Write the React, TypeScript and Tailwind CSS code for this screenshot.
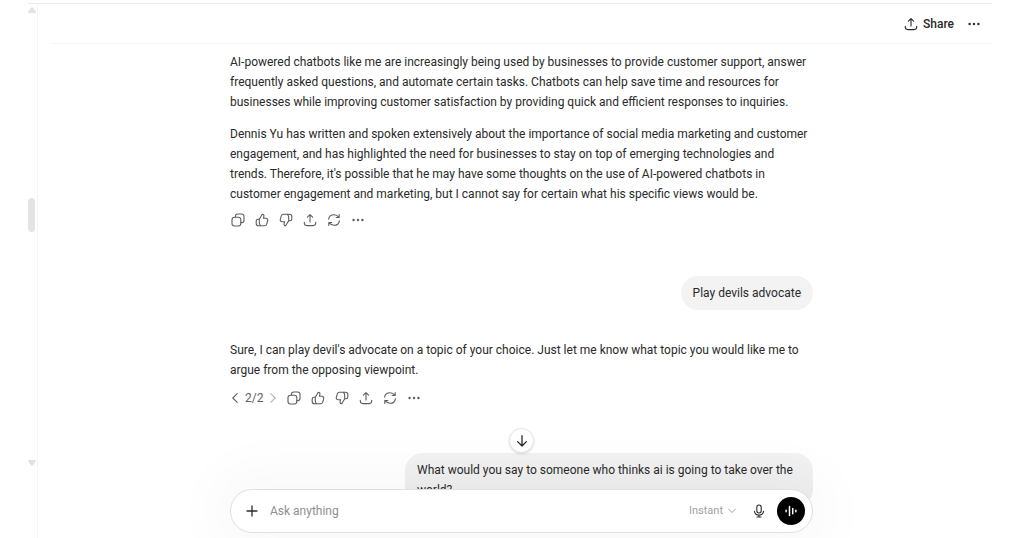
import React, { useState } from 'react';

interface IconProps {
  className?: string;
  children: React.ReactNode;
}

const Icon: React.FC<IconProps> = ({ className = 'size-4', children }) => (
  <svg
    viewBox="0 0 16 16"
    className={className}
    fill="none"
    stroke="currentColor"
    strokeWidth="1.1"
    strokeLinecap="round"
    strokeLinejoin="round"
    aria-hidden="true"
  >
    {children}
  </svg>
);

const CopyIcon = () => (
  <Icon>
    <rect x="2" y="5.2" width="8.8" height="8.8" rx="2.4" />
    <path d="M5.4 5V4.4A2.4 2.4 0 0 1 7.8 2h3.8A2.4 2.4 0 0 1 14 4.4v3.8a2.4 2.4 0 0 1-2.4 2.4h-.7" />
  </Icon>
);

const ThumbPath = () => (
  <>
    <path d="M5.3 7.3 8.3 2.2c1.3 0 1.9 1 1.6 2.1L9.4 6.3h2.5c1.3 0 2.2 1.2 1.8 2.4l-1 3.4c-.3 1-1.1 1.600-2.100 1.600H4.700c-1.400 0-2.500-1-2.500-2.300V9c0-1 .8-1.800 1.800-1.800h1.300Z" />
    <path d="M5.3 7.3v2.9c0 1.5.4 2.5 1.1 3.4" />
  </>
);

const ThumbUpIcon = () => <Icon><ThumbPath /></Icon>;
const ThumbDownIcon = () => <Icon className="size-4 rotate-180"><ThumbPath /></Icon>;

const ShareIcon = () => (
  <Icon>
    <path d="M8 10V2.800M5.400 5.200 8 2.600l2.600 2.600M2.300 10.300v.8c0 1.500 1 2.500 2.500 2.500h6.400c1.500 0 2.500-1 2.500-2.500v-.8" />
  </Icon>
);

const RetryIcon = () => (
  <Icon>
    <path d="M2.600 7.200C3 4.500 5.200 2.700 8 2.700c2 0 3.600.9 4.900 2.600M13.200 2.500v3h-3M13.400 8.800c-.4 2.700-2.600 4.500-5.400 4.500-2 0-3.600-.9-4.900-2.600M2.800 13.500v-3h3" />
  </Icon>
);

const MoreIcon = () => (
  <Icon>
    <g fill="currentColor" stroke="none">
      <circle cx="3.600" cy="8" r="1.200" />
      <circle cx="8" cy="8" r="1.200" />
      <circle cx="12.400" cy="8" r="1.200" />
    </g>
  </Icon>
);

const actions = [
  { label: 'Copy', icon: <CopyIcon /> },
  { label: 'Good response', icon: <ThumbUpIcon /> },
  { label: 'Bad response', icon: <ThumbDownIcon /> },
  { label: 'Share', icon: <ShareIcon /> },
  { label: 'Try again', icon: <RetryIcon /> },
  { label: 'More actions', icon: <MoreIcon /> },
];

const MessageActions = () => (
  <div className="flex gap-2">
    {actions.map(({ label, icon }) => (
      <button key={label} type="button" aria-label={label}>{icon}</button>
    ))}
  </div>
);

const App: React.FC = () => {
  const [draft, setDraft] = useState('');

  return (
    <div className="h-screen overflow-hidden bg-white pl-7 pr-8 pt-[3px] font-['Roboto','Open_Sans',sans-serif] text-xs leading-5 text-[#2a2a2a]">
      <div className="flex h-full border-t border-[#ebebeb]">
        <aside className="flex w-[10px] shrink-0 flex-col border-r border-[#f5f5f5]">
          <svg viewBox="0 0 8 6" className="mt-[3px] h-[6px] w-2 text-[#e2e2e2]" aria-hidden="true">
            <path d="M3 .5h2L8 5v1H0V5Z" fill="currentColor" />
          </svg>
          <div className="mt-[185px] h-[34px] w-[7px] rounded-full bg-[#e4e4e4]" />
          <svg viewBox="0 0 8 6" className="mt-[228px] h-[6px] w-2 text-[#e2e2e2]" aria-hidden="true">
            <path d="M0 0h8v1L5 5.500H3L0 1Z" fill="currentColor" />
          </svg>
        </aside>

        <main className="relative ml-[13px] flex min-w-0 flex-1 flex-col">
          <header className="flex h-10 shrink-0 items-center justify-end gap-3 border-b border-[#f6f6f6] pr-[10px]">
            <button type="button" className="flex items-center gap-1 font-medium">
              <ShareIcon />
              Share
            </button>
            <button type="button" aria-label="Conversation options"><MoreIcon /></button>
          </header>

          <div className="min-h-0 flex-1 overflow-hidden">
            <div className="mx-auto flex max-w-[583px] flex-col pt-2">
              <article>
                <p>
                  AI-powered chatbots like me are increasingly being used by businesses to provide customer support, answer frequently asked questions, and automate certain tasks. Chatbots can help save time and resources for businesses while improving customer satisfaction by providing quick and efficient responses to inquiries.
                </p>
                <p className="mt-3">
                  Dennis Yu has written and spoken extensively about the importance of social media marketing and customer engagement, and has highlighted the need for businesses to stay on top of emerging technologies and trends. Therefore, it's possible that he may have some thoughts on the use of AI-powered chatbots in customer engagement and marketing, but I cannot say for certain what his specific views would be.
                </p>
                <div className="mt-2 text-[#5d5d5d]">
                  <MessageActions />
                </div>
              </article>

              <p className="mt-12 self-end rounded-full bg-[#f3f3f3] px-3 py-[7px]">Play devils advocate</p>

              <article className="mt-[30px]">
                <p>
                  Sure, I can play devil's advocate on a topic of your choice. Just let me know what topic you would like me to argue from the opposing viewpoint.
                </p>
                <div className="mt-2 flex items-center text-[#5d5d5d]">
                  <button type="button" aria-label="Previous response">
                    <Icon className="h-4 w-[10px]"><path d="M11.500 1 4.500 8l7 7" strokeWidth="1.700" /></Icon>
                  </button>
                  <span className="px-[5px]">2/2</span>
                  <button type="button" aria-label="Next response" className="mr-2 text-[#b4b4b4]">
                    <Icon className="h-4 w-[10px]"><path d="m4.500 1 7 7-7 7" strokeWidth="1.700" /></Icon>
                  </button>
                  <MessageActions />
                </div>
              </article>

              <p className="mt-[45px] w-[408px] self-end rounded-[18px] bg-linear-to-b from-[#f2f2f2] to-[#ececec] px-3 py-[7px]">
                What would you say to someone who thinks ai is going to take over the world?
              </p>
            </div>
          </div>

          <div className="absolute inset-x-0 bottom-0 flex flex-col items-center pb-[5px]">
            <button
              type="button"
              aria-label="Scroll to bottom"
              className="mb-9 flex size-[25px] items-center justify-center rounded-full border border-[#e6e6e6] bg-white shadow-sm"
            >
              <Icon className="size-[14px]"><path d="M8 2v11.500M3 8.700l5 5 5-5" strokeWidth="1.500" /></Icon>
            </button>
            <form
              onSubmit={(e) => e.preventDefault()}
              className="flex h-11 w-full max-w-[583px] items-center rounded-full border border-[#e0e0e0] bg-white pl-[13px] pr-[7px] shadow-[0_0_60px_16px_rgba(0,0,0,0.03)]"
            >
              <button type="button" aria-label="Add files">
                <Icon><path d="M8 3v10M3 8h10" strokeWidth="1.300" /></Icon>
              </button>
              <input
                type="text"
                aria-label="Message"
                value={draft}
                onChange={(e) => setDraft(e.target.value)}
                placeholder="Ask anything"
                className="ml-[10px] min-w-0 flex-1 outline-none placeholder:text-[#8f8f8f]"
              />
              <button type="button" className="flex items-center gap-1 text-[11px] text-[#a0a0a0]">
                Instant
                <Icon className="size-[10px]"><path d="m2.500 5 5.500 5.500L13.500 5" strokeWidth="1.600" /></Icon>
              </button>
              <button type="button" aria-label="Dictate" className="ml-[14px]">
                <Icon>
                  <rect x="5.800" y="2" width="4.400" height="8" rx="2.200" />
                  <path d="M3.400 8.300a4.700 4.700 0 0 0 9.200 0M8 12v2M6 14h4" />
                </Icon>
              </button>
              <button type="button" aria-label="Start voice mode" className="ml-[10px] flex size-7 items-center justify-center rounded-full bg-black text-white">
                <Icon className="size-3"><path d="M1.500 7v2M6 2v12M10.300 4.500v7M14.500 7v2" strokeWidth="2" /></Icon>
              </button>
            </form>
          </div>
        </main>
      </div>
    </div>
  );
};

export default App;
